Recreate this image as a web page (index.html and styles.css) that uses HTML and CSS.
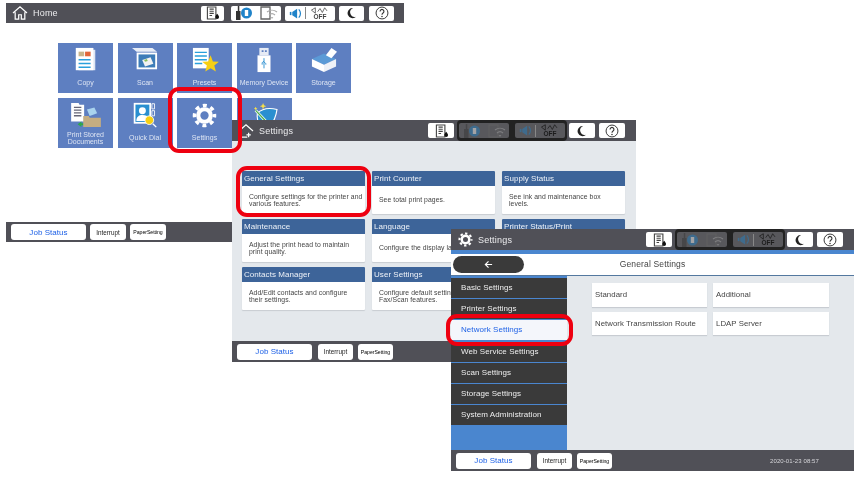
FILE: index.html
```html
<!DOCTYPE html>
<html lang="en">
<head>
<meta charset="utf-8">
<title>Settings navigation</title>
<link rel="stylesheet" href="styles.css">
</head>
<body>
<svg class="defs" width="0" height="0">
  <symbol id="i-ink" viewBox="0 0 20 16"><path d="M4 1h10v14H4z" fill="#fff" stroke="#444" stroke-width="1.300"/><path d="M6.500 3.500h5M6.500 6h5M6.500 8.500h5M6.500 11h3" stroke="#444" stroke-width="1.300"/><path d="M15.500 9c1.500 1.900 2.200 2.900 2.200 3.800a2.200 2.200 0 0 1-4.400 0c0-.9.700-1.900 2.200-3.800z" fill="#111"/></symbol>
  <symbol id="i-net" viewBox="0 0 44 16"><path d="M2 6h4.500v9H2zM3.800 1h1.500v5H3.800z" fill="#333"/><circle cx="12.500" cy="8" r="5.500" fill="#1f83c9"/><path d="M10.800 5h3.400v6h-3.400z" fill="#fff"/><path d="M27 2h9v12h-9z" fill="none" stroke="#666" stroke-width="1.300"/><path d="M33 7a8 8 0 0 1 10 0M35 10a4.500 4.500 0 0 1 6 0M37 13a2 2 0 0 1 2 0" fill="none" stroke="#aaa" stroke-width="1.200"/></symbol>
  <symbol id="i-vol" viewBox="0 0 16 16"><path d="M1 6h2v4H1z" fill="#1f83c9"/><path d="M4 6l6-4v12l-6-4z" fill="#1f83c9"/><path d="M12 3a7 7 0 0 1 0 10" fill="none" stroke="#1f83c9" stroke-width="1.500"/></symbol>
  <symbol id="i-wave" viewBox="0 0 24 9"><path d="M1 4l5-3v7zM9 6l3-4 3 5 3-6 3 4" fill="none" stroke="currentColor" stroke-width="1"/></symbol>
  <symbol id="i-moon" viewBox="0 0 16 16"><path d="M9 1.500a6.700 6.700 0 1 0 4.500 11.500A6.200 6.200 0 0 1 9 1.500z" fill="#222"/></symbol>
  <symbol id="i-help" viewBox="0 0 16 16"><circle cx="8" cy="8" r="6.800" fill="none" stroke="#333" stroke-width="1.100"/><path d="M5.800 6.200a2.200 2.200 0 1 1 3.400 1.800c-.8.500-1.200.9-1.200 2" fill="none" stroke="#333" stroke-width="1.300"/><circle cx="8" cy="12" r=".9" fill="#333"/></symbol>
  <symbol id="i-gear" viewBox="0 0 24 24"><circle cx="12" cy="12" r="6" fill="none" stroke="#fff" stroke-width="4"/><circle cx="12" cy="12" r="9.600" fill="none" stroke="#fff" stroke-width="3.400" stroke-dasharray="3.800 3.740" stroke-dashoffset="1.900"/></symbol>
</svg>

<main class="stage">

  <section class="win win-home">
    <header class="top">
      <svg class="home-ico" viewBox="0 0 18 16"><path d="M1 8l8-7 8 7M3.500 7v8h4v-5h3v5h4V7" fill="none" stroke="#fff" stroke-width="1.400"/></svg>
      <span class="top-title">Home</span>
      <div class="status status-lit">
        <span class="sbtn s-ink"><svg class="ic-ink"><use href="#i-ink"/></svg></span>
        <span class="sbtn s-net"><svg class="ic-net"><use href="#i-net"/></svg></span>
        <span class="sbtn s-vol"><svg class="ic-vol"><use href="#i-vol"/></svg><i class="sep"></i><span class="off"><svg class="ic-wave"><use href="#i-wave"/></svg><b>OFF</b></span></span>
        <span class="sbtn s-moon"><svg class="ic-moon"><use href="#i-moon"/></svg></span>
        <span class="sbtn s-help"><svg class="ic-help"><use href="#i-help"/></svg></span>
      </div>
    </header>
    <div class="tiles">
      <a class="tile">
        <svg class="tile-ico" viewBox="0 0 26 28"><path d="M5 3h18v22H5z" fill="#dfe6f3"/><path d="M2 1h19v24H2z" fill="#fff"/><path d="M5 5h6v5H5z" fill="#c9b48a"/><path d="M12 5h6v5h-6z" fill="#e2673a"/><path d="M5 13h13v1.500H5zM5 17h13v1.500H5zM5 21h13v1.500H5z" fill="#2aa0dc"/></svg>
        <span class="tile-label">Copy</span>
      </a>
      <a class="tile">
        <svg class="tile-ico" viewBox="0 0 30 28"><path d="M1 1h22l5 4H6z" fill="#e8edf6"/><path d="M6 6h22v18H6z" fill="#fff"/><path d="M8 8h18v14H8z" fill="#3d7cb8"/><path d="M12 14l9-3 3 7-9 3z" fill="#f2f2f2"/><path d="M14 14l3-1 1 2-3 1z" fill="#8cbf5a"/></svg>
        <span class="tile-label">Scan</span>
      </a>
      <a class="tile">
        <svg class="tile-ico" viewBox="0 0 30 28"><path d="M2 1h17v22H2z" fill="#fff"/><path d="M4 5h13v1.500H4zM4 9h13v1.500H4zM4 13h13v1.500H4zM4 17h8v1.500H4z" fill="#2aa0dc"/><path d="M21 9l2.500 6.500 6.500.3-5 4.200 1.700 6.500-5.700-3.700-5.700 3.700 1.700-6.500-5-4.200 6.500-.3z" fill="#f6cf14"/></svg>
        <span class="tile-label">Presets</span>
      </a>
      <a class="tile">
        <svg class="tile-ico" viewBox="0 0 30 28"><path d="M10 1h10v8H10z" fill="#e6ebf5"/><path d="M12.500 3.500h2v2h-2zM16 3.500h2v2h-2z" fill="#5e7fc1"/><path d="M8 9h14v18H8z" fill="#fff"/><path d="M15 12v11M15 15l-2 2v2M15 16l2 2v1" stroke="#2a8fd0" stroke-width="1" fill="none"/></svg>
        <span class="tile-label">Memory Device</span>
      </a>
      <a class="tile">
        <svg class="tile-ico" viewBox="0 0 30 28"><path d="M2 13l13-6 13 6-13 6z" fill="#5b9ad6"/><path d="M2 13l13 6v8L2 21z" fill="#fff"/><path d="M28 13L15 19v8l13-6z" fill="#eef1f7"/><path d="M17 9l6-8 6 4-6 7z" fill="#fff"/></svg>
        <span class="tile-label">Storage</span>
      </a>
      <a class="tile">
        <svg class="tile-ico tile-ico-wide" viewBox="0 0 34 28"><path d="M1 1h8l1 2h5v18H1z" fill="#fff"/><path d="M4 5h8v1.500H4zM4 8h8v1.500H4zM4 11h8v1.500H4zM4 14h8v1.500H4z" fill="#667"/><path d="M8 24l4-3v2h5v2h-5v2z" fill="#2ea84a"/><path d="M18 8l8-2 3 6-8 3z" fill="#a9d3ee"/><path d="M14 15h6l1 2h12v10H14z" fill="#c4ad82"/></svg>
        <span class="tile-label tile-label-two">Print Stored<br>Documents</span>
      </a>
      <a class="tile">
        <svg class="tile-ico" viewBox="0 0 30 30"><path d="M2 1h20v24H2z" fill="#fff"/><path d="M4 3h16v20H4z" fill="#2a8fd0"/><circle cx="12" cy="10" r="4" fill="#fff"/><path d="M5 22c0-5 3-7 7-7s6 1 7 4l-1 3z" fill="#fff"/><path d="M23 2h3v6h-3zM23 10h3v6h-3z" fill="none" stroke="#fff" stroke-width="1"/><circle cx="20" cy="21" r="5" fill="#f6cf14" stroke="#fff"/><path d="M24 25l4 4" stroke="#fff" stroke-width="1.500"/></svg>
        <span class="tile-label">Quick Dial</span>
      </a>
      <a class="tile">
        <svg class="tile-gear"><use href="#i-gear"/></svg>
        <span class="tile-label">Settings</span>
      </a>
      <a class="tile">
        <svg class="tile-ico" viewBox="0 0 30 28"><path d="M8 12c5-5 13-6 21-4-1 8-4 14-8 20H11C8 22 7 17 8 12z" fill="#2a8fd0" stroke="#fff" stroke-width="1.200"/><path d="M6 9l15 16" stroke="#fff" stroke-width="3"/><path d="M6 9l15 16" stroke="#4fae4a" stroke-width="1.500"/><path d="M14 1l1 2.500 2.500 1-2.500 1-1 2.500-1-2.500-2.500-1 2.500-1zM6 5l.7 1.500L8 7l-1.300.5L6 9l-.7-1.500L4 7l1.300-.5z" fill="#f6df4a"/></svg>
      </a>
    </div>
    <footer class="bottom">
      <span class="bbtn bbtn-job">Job Status</span>
      <span class="bbtn bbtn-small">Interrupt</span>
      <span class="bbtn bbtn-small bbtn-paper">PaperSetting</span>
    </footer>
  </section>

  <section class="win win-settings">
    <header class="top">
      <svg class="home-ico home-ico-plus" viewBox="0 0 18 16"><path d="M1 8l8-7 8 7M3.500 7v8h7M12 10v5M9.500 12.500h5" fill="none" stroke="#fff" stroke-width="1.400"/></svg>
      <span class="top-title">Settings</span>
      <div class="status">
        <span class="sbtn s-ink"><svg class="ic-ink"><use href="#i-ink"/></svg></span>
        <div class="status-dim">
          <span class="sbtn s-net"><svg class="ic-net"><use href="#i-net"/></svg></span>
          <span class="sbtn s-vol"><svg class="ic-vol"><use href="#i-vol"/></svg><i class="sep"></i><span class="off"><svg class="ic-wave"><use href="#i-wave"/></svg><b>OFF</b></span></span>
        </div>
        <span class="sbtn s-moon"><svg class="ic-moon"><use href="#i-moon"/></svg></span>
        <span class="sbtn s-help"><svg class="ic-help"><use href="#i-help"/></svg></span>
      </div>
    </header>
    <div class="cards">
      <article class="card"><h3>General Settings</h3><p>Configure settings for the printer and various features.</p></article>
      <article class="card"><h3>Print Counter</h3><p class="card-one">See total print pages.</p></article>
      <article class="card"><h3>Supply Status</h3><p>See ink and maintenance box<br>levels.</p></article>
      <article class="card"><h3>Maintenance</h3><p>Adjust the print head to maintain print quality.</p></article>
      <article class="card"><h3>Language</h3><p class="card-one">Configure the display language.</p></article>
      <article class="card"><h3>Printer Status/Print</h3><p class="card-one">Print status sheets.</p></article>
      <article class="card"><h3>Contacts Manager</h3><p>Add/Edit contacts and configure<br>their settings.</p></article>
      <article class="card"><h3>User Settings</h3><p>Configure default settings for Fax/Scan features.</p></article>
    </div>
    <footer class="bottom">
      <span class="bbtn bbtn-job">Job Status</span>
      <span class="bbtn bbtn-small">Interrupt</span>
      <span class="bbtn bbtn-small bbtn-paper">PaperSetting</span>
    </footer>
  </section>

  <section class="win win-general">
    <header class="top">
      <svg class="top-gear"><use href="#i-gear"/></svg>
      <span class="top-title">Settings</span>
      <div class="status">
        <span class="sbtn s-ink"><svg class="ic-ink"><use href="#i-ink"/></svg></span>
        <div class="status-dim">
          <span class="sbtn s-net"><svg class="ic-net"><use href="#i-net"/></svg></span>
          <span class="sbtn s-vol"><svg class="ic-vol"><use href="#i-vol"/></svg><i class="sep"></i><span class="off"><svg class="ic-wave"><use href="#i-wave"/></svg><b>OFF</b></span></span>
        </div>
        <span class="sbtn s-moon"><svg class="ic-moon"><use href="#i-moon"/></svg></span>
        <span class="sbtn s-help"><svg class="ic-help"><use href="#i-help"/></svg></span>
      </div>
    </header>
    <div class="subbar">
      <span class="back"><svg class="back-ico" viewBox="0 0 10 10"><path d="M9 5H1.500M5 1.500L1.500 5 5 8.500" fill="none" stroke="#fff" stroke-width="1.300"/></svg></span>
      <span class="subtitle">General Settings</span>
    </div>
    <div class="general-body">
      <nav class="side">
        <a class="side-item">Basic Settings</a>
        <a class="side-item">Printer Settings</a>
        <a class="side-item side-item-on">Network Settings</a>
        <a class="side-item">Web Service Settings</a>
        <a class="side-item">Scan Settings</a>
        <a class="side-item">Storage Settings</a>
        <a class="side-item">System Administration</a>
      </nav>
      <div class="options">
        <a class="option">Standard</a>
        <a class="option">Additional</a>
        <a class="option">Network Transmission Route</a>
        <a class="option">LDAP Server</a>
      </div>
    </div>
    <footer class="bottom">
      <span class="bbtn bbtn-job">Job Status</span>
      <span class="bbtn bbtn-small">Interrupt</span>
      <span class="bbtn bbtn-small bbtn-paper">PaperSetting</span>
      <time class="clock">2020-01-23 08:57</time>
    </footer>
  </section>

  <i class="ring ring-settings"></i>
  <i class="ring ring-general"></i>
  <i class="ring ring-network"></i>
</main>
</body>
</html>
```

FILE: styles.css
```css
* { box-sizing: border-box; }
html, body { margin: 0; background: #fff; }
body { font-family: "Liberation Sans", Arial, sans-serif; color: #444; }
.defs { position: absolute; }

.stage { position: relative; width: 860px; height: 479px; overflow: hidden; filter: blur(.35px); will-change: transform; }

.win { position: absolute; display: flex; flex-direction: column; }
.win-home { left: 6px; top: 3px; width: 398px; height: 239px; background: #fff; }
.win-settings { left: 232px; top: 120px; width: 404px; height: 242px; background: #e4e8ec; }
.win-general { left: 451px; top: 229px; width: 403px; height: 242px; background: #e4e8ec; }

.top { flex: none; height: 21px; background: #505057; display: flex; align-items: center; padding: 0 11px 0 0; color: #ececee; }
.win-home .top { height: 20px; padding-right: 10px; }
.home-ico { width: 16px; height: 14px; margin-left: 6px; flex: none; }
.top-gear { width: 15px; height: 15px; margin-left: 7px; flex: none; }
.top-title { font-size: 9px; margin-left: 5px; letter-spacing: .2px; }

.status { margin-left: auto; display: flex; align-items: center; color: #444; }
.status > .sbtn { margin-left: 3px; }
.status > .s-ink { margin-left: 0; }
.status > .s-moon { margin-left: 2px; }
.status > .s-help { margin-left: 4px; }
.status-lit > .s-ink { width: 23px; }
.status-lit > .s-net { margin-left: 7px; }
.status-lit > .s-vol { margin-left: 4px; }
.status-lit > .s-moon { margin-left: 4px; width: 25px; }
.status-lit > .s-help { margin-left: 5px; width: 25px; }
.status-dim { display: flex; align-items: center; gap: 6px; height: 21px; width: 110px; background: #222; padding: 0 2px; border-radius: 4px; margin-left: 3px; color: #1c1c1c; }
.status-dim .sbtn { background: #58585c; }
.status-dim .ic-net, .status-dim .ic-vol { opacity: .45; }
.sbtn { height: 15px; background: #fff; border-radius: 2px; display: flex; align-items: center; justify-content: center; flex: none; }
.s-ink { width: 26px; }
.s-net { width: 50px; }
.s-vol { width: 50px; gap: 3px; }
.s-moon, .s-help { width: 26px; }
.ic-ink { width: 17px; height: 14px; }
.ic-net { width: 44px; height: 16px; flex: none; }
.ic-vol { width: 13px; height: 13px; }
.ic-moon { width: 12px; height: 12px; }
.ic-help { width: 14px; height: 14px; }
.sep { width: 1px; height: 12px; background: #888; }
.off { display: flex; flex-direction: column; align-items: center; width: 22px; line-height: 6px; }
.ic-wave { width: 20px; height: 7px; }
.off b { font-size: 6.500px; font-weight: 700; color: inherit; }

.tiles { display: grid; grid-template-columns: repeat(5, 55px); grid-auto-rows: 50px; gap: 4.500px; padding: 20px 0 0 52px; }
.tile { background: #5e7fc1; display: flex; flex-direction: column; align-items: center; position: relative; }
.tile-ico { width: 28px; height: 26px; margin-top: 4px; flex: none; }
.tile-ico-wide { width: 32px; }
.tile-gear { width: 25px; height: 25px; margin-top: 5px; flex: none; }
.tile-label { position: absolute; left: 0; right: 0; bottom: 7px; text-align: center; font-size: 7px; line-height: 7px; color: #dde4f3; }
.tile-label-two { bottom: 3px; }

.bottom { margin-top: auto; height: 21px; background: #505057; display: flex; align-items: center; gap: 5px; padding-left: 5px; flex: none; }
.win-home .bottom { height: 20px; gap: 4px; }
.win-home .bbtn-small { width: 36px; }
.win-home .bbtn-job { margin-right: 0; }
.bbtn { height: 16px; background: #fff; border-radius: 3px; display: flex; align-items: center; justify-content: center; flex: none; }
.bbtn-job { width: 75px; color: #1f62e6; font-size: 8px; margin-right: 1px; letter-spacing: .05px; }
.bbtn-small { width: 35px; font-size: 6.300px; color: #222; }
.bbtn-paper { font-size: 5.200px; letter-spacing: -.05px; color: #000; }
.clock { margin-left: auto; margin-right: 35px; font-size: 6px; color: #d6d6da; letter-spacing: .1px; }

.cards { display: grid; grid-template-columns: repeat(3, 123px); grid-auto-rows: 42.500px; gap: 5.500px 7px; padding: 30px 0 0 10px; }
.card { background: #fff; border-radius: 1px; box-shadow: 0 1px 1px #c8ccd2; overflow: hidden; }
.card h3 { margin: 0; height: 15px; background: #3d6499; color: #eef2f8; font-size: 8px; font-weight: 400; line-height: 15px; padding-left: 2px; letter-spacing: .05px; }
.card p { margin: 0; height: 27px; padding: 6.500px 1px 0 7px; font-size: 6.800px; line-height: 7px; color: #444; letter-spacing: .08px; }
.card .card-one { padding-top: 10px; }

.subbar { flex: none; position: relative; height: 26px; background: #fff; border-top: 4px solid #4a86cf; border-bottom: 1px solid #54789f; display: flex; align-items: center; justify-content: center; padding-bottom: 1px; }
.back { position: absolute; left: 2px; top: 2px; width: 71px; height: 17px; background: #3a3a3a; border-radius: 9px; display: flex; align-items: center; justify-content: center; }
.back-ico { width: 9px; height: 9px; }
.subtitle { font-size: 8.500px; color: #444; letter-spacing: .15px; }

.general-body { flex: 1; display: flex; min-height: 0; }
.side { width: 116px; background: #4a86cf; display: flex; flex-direction: column; gap: 1.200px; padding-top: 2px; flex: none; }
.side-item { height: 20px; background: #3a3a3a; color: #eee; font-size: 8px; line-height: 20px; padding-left: 10px; letter-spacing: .06px; flex: none; }
.side-item-on { background: #f4f6fb; color: #1f62e6; }

.options { display: grid; grid-template-columns: 115px 116px; grid-auto-rows: 23.500px; gap: 5px 6px; padding: 7px 0 0 25px; align-content: start; }
.option { background: #fff; box-shadow: 0 1px 1px #c8ccd2; font-size: 7.800px; color: #444; display: flex; align-items: center; padding-left: 3px; letter-spacing: .05px; white-space: nowrap; }

.ring { position: absolute; border: 4px solid #ee0010; border-radius: 11px; }
.ring-settings { left: 168px; top: 87px; width: 74px; height: 66px; }
.ring-general { left: 236px; top: 166px; width: 135px; height: 51px; }
.ring-network { left: 446px; top: 314px; width: 127px; height: 32px; }
```
